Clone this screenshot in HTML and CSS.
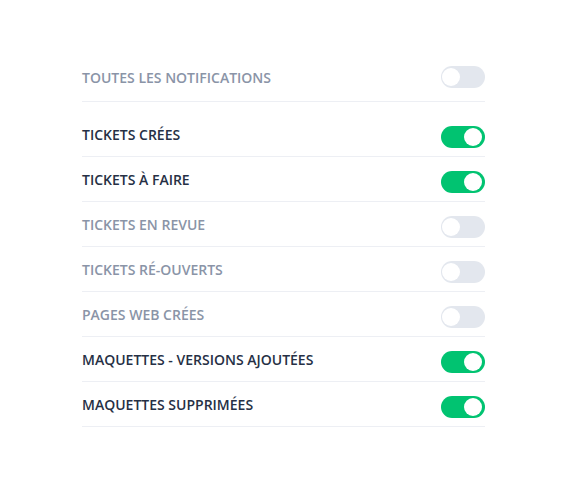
FILE: index.html
```html
<!DOCTYPE html>
<html lang="fr">
  <head>
    <meta charset="UTF-8" />
    <meta name="viewport" content="width=device-width, initial-scale=1.0" />
    <title>Notifications</title>
    <link rel="stylesheet" href="styles.css">
  </head>
  <body>
    <div class="settings">
      <div class="row row-all">
        <span class="label muted">Toutes les notifications</span>
        <span class="toggle"></span>
      </div>

      <ul class="list">
        <li class="row">
          <span class="label">Tickets crées</span>
          <span class="toggle on"></span>
        </li>
        <li class="row">
          <span class="label">Tickets à faire</span>
          <span class="toggle on"></span>
        </li>
        <li class="row">
          <span class="label muted">Tickets en revue</span>
          <span class="toggle"></span>
        </li>
        <li class="row">
          <span class="label muted">Tickets ré-ouverts</span>
          <span class="toggle"></span>
        </li>
        <li class="row">
          <span class="label muted">Pages web crées</span>
          <span class="toggle"></span>
        </li>
        <li class="row">
          <span class="label">Maquettes - versions ajoutées</span>
          <span class="toggle on"></span>
        </li>
        <li class="row">
          <span class="label">Maquettes supprimées</span>
          <span class="toggle on"></span>
        </li>
      </ul>
    </div>
  </body>
</html>
```

FILE: styles.css
```css
* {
  box-sizing: border-box;
  margin: 0;
  padding: 0;
}

body {
  font-family: "Open Sans", "Liberation Sans", sans-serif;
  background: #fff;
  padding: 66px 85px 0 82px;
}

.settings {
  width: 403px;
}

.row {
  display: flex;
  align-items: center;
  justify-content: space-between;
  height: 45px;
  border-bottom: 1px solid #edeff4;
  padding: 14px 0 8px;
}

.row-all {
  height: 36px;
  padding: 0 0 13px;
}

.list {
  list-style: none;
  margin-top: 10px;
}

.label {
  font-size: 14px;
  line-height: 17px;
  font-weight: 600;
  text-transform: uppercase;
  color: #263045;
}

.list .label {
  padding-bottom: 5px;
}

.label.muted {
  color: #8a94a7;
}

/* Toggle switch */
.toggle {
  position: relative;
  width: 44px;
  height: 22px;
  border-radius: 11px;
  background: #e3e7ee;
  flex-shrink: 0;
}

.toggle::after {
  content: "";
  position: absolute;
  top: 2px;
  left: 1px;
  width: 18px;
  height: 18px;
  border-radius: 50%;
  background: #fff;
}

.toggle.on {
  background: #01c371;
}

.toggle.on::after {
  left: auto;
  right: 3px;
}
```
